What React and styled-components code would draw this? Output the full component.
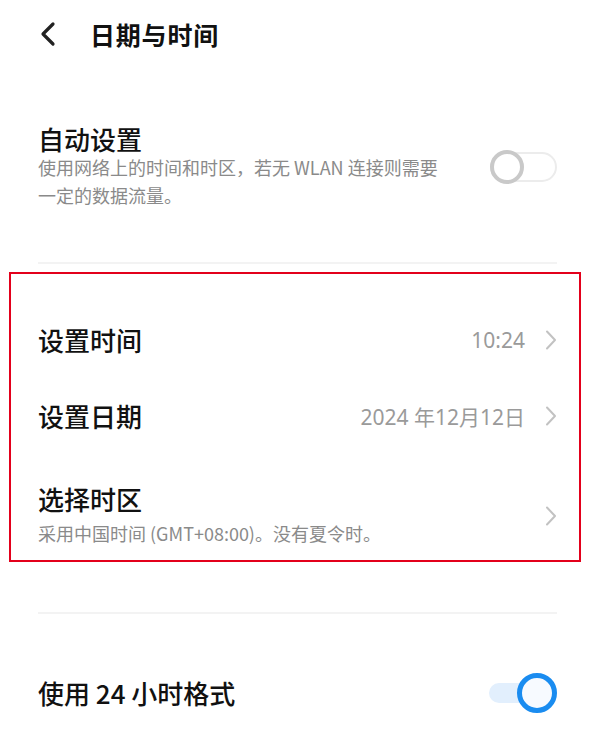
import React from 'react';
import styled, { createGlobalStyle } from 'styled-components';

const GlobalStyle = createGlobalStyle`
    body {
        margin: 0;
        background: #fff;
        font-family: "Noto Sans CJK SC", "Noto Sans", sans-serif;
        color: #111;
    }
`;

const Page = styled.div`
    width: 600px;
    height: 755px;
    overflow: hidden;
    background: #fff;
`;

const Header = styled.div`
    height: 68px;
    display: flex;
    align-items: center;
    padding-left: 40px;
`;

const HeaderTitle = styled.h1`
    margin: 0 0 0 34px;
    font-size: 25px;
    font-weight: 700;
    letter-spacing: 0.8px;
`;

const Row = styled.div`
    display: flex;
    align-items: center;
    justify-content: space-between;
    padding: ${(p) => p.$pad || '0 43px 0 38px'};
    height: ${(p) => (p.$h ? `${p.$h}px` : 'auto')};
    margin-top: ${(p) => p.$mt || 0}px;
`;

const TextBlock = styled.div`
    display: flex;
    flex-direction: column;
`;

const Title = styled.div`
    font-size: 26px;
    line-height: ${(p) => p.$lh || 30}px;
    font-weight: 500;
    color: #111;
`;

const Sub = styled.div`
    font-size: 18px;
    line-height: ${(p) => p.$lh || 30}px;
    color: #8a8a8a;
    margin-top: ${(p) => p.$mt || 0}px;
    max-width: 416px;
`;

const Divider = styled.div`
    height: 2px;
    margin: ${(p) => p.$m};
    background: #f3f3f3;
    margin-left: 38px;
    margin-right: 43px;
`;

const Group = styled.section`
    margin: 8px 19px 0 9px;
    border: 2px solid #e3001b;
    padding: 28px 0 12px;
`;

const Trailing = styled.div`
    display: flex;
    align-items: center;
    gap: 20px;
`;

const Value = styled.span`
    font-size: 21px;
    color: #9a9a9a;
    font-family: "Noto Sans", "Noto Sans CJK SC", sans-serif;
`;

const Track = styled.div`
    position: relative;
    width: ${(p) => (p.$on ? 68 : 67)}px;
    height: ${(p) => (p.$on ? 40 : 34)}px;
    display: flex;
    align-items: center;
`;

const TrackBar = styled.div`
    height: ${(p) => (p.$on ? 20 : 30)}px;
    box-sizing: border-box;
    border-radius: 16px;
    background: ${(p) => (p.$on ? '#e2effd' : '#fff')};
    border: ${(p) => (p.$on ? 'none' : '2px solid #ececec')};
    width: ${(p) => (p.$on ? '50px' : '100%')};
`;

const Knob = styled.div`
    position: absolute;
    top: 0;
    ${(p) => (p.$on ? 'right: 0;' : 'left: 0;')}
    box-sizing: border-box;
    width: ${(p) => (p.$on ? 40 : 34)}px;
    height: ${(p) => (p.$on ? 40 : 34)}px;
    border-radius: 50%;
    background: ${(p) => (p.$on ? '#f7faff' : '#fff')};
    border: ${(p) => (p.$on ? '5px solid #1a8cf0' : '4px solid #c9c9c9')};
`;

const Switch = ({ on }) => (
    <Track $on={on}>
        <TrackBar $on={on} />
        <Knob $on={on} />
    </Track>
);

const BackIcon = () => (
    <svg width="16" height="26" viewBox="0 0 16 26">
        <polyline points="13,3 3,13 13,23" fill="none" stroke="#222" strokeWidth="3.2" strokeLinecap="round" strokeLinejoin="round" />
    </svg>
);

const Chevron = () => (
    <svg width="12" height="20" viewBox="0 0 12 20">
        <polyline points="2,1.5 10,10 2,18.5" fill="none" stroke="#c2c2c2" strokeWidth="2" strokeLinecap="round" strokeLinejoin="round" />
    </svg>
);

const inner = '0 22px 0 27px';

export default function App() {
    return (
        <Page>
            <GlobalStyle />
            <Header>
                <BackIcon />
                <HeaderTitle>日期与时间</HeaderTitle>
            </Header>

            <Row $mt={57}>
                <TextBlock>
                    <Title $lh={28}>自动设置</Title>
                    <Sub $lh={28}>使用网络上的时间和时区，若无 WLAN 连接则需要一定的数据流量。</Sub>
                </TextBlock>
                <Switch />
            </Row>

            <Divider $m="53px 0 0" />

            <Group>
                <Row $pad={inner} $h={76}>
                    <Title>设置时间</Title>
                    <Trailing>
                        <Value>10:24</Value>
                        <Chevron />
                    </Trailing>
                </Row>
                <Row $pad={inner} $h={76}>
                    <Title>设置日期</Title>
                    <Trailing>
                        <Value>2024 年12月12日</Value>
                        <Chevron />
                    </Trailing>
                </Row>
                <Row $pad={inner} $mt={30}>
                    <TextBlock>
                        <Title>选择时区</Title>
                        <Sub $mt={4}>采用中国时间 (GMT+08:00)。没有夏令时。</Sub>
                    </TextBlock>
                    <Chevron />
                </Row>
            </Group>

            <Divider $m="50px 0 0" />

            <Row $mt={59}>
                <Title>使用 24 小时格式</Title>
                <Switch on />
            </Row>
        </Page>
    );
}
